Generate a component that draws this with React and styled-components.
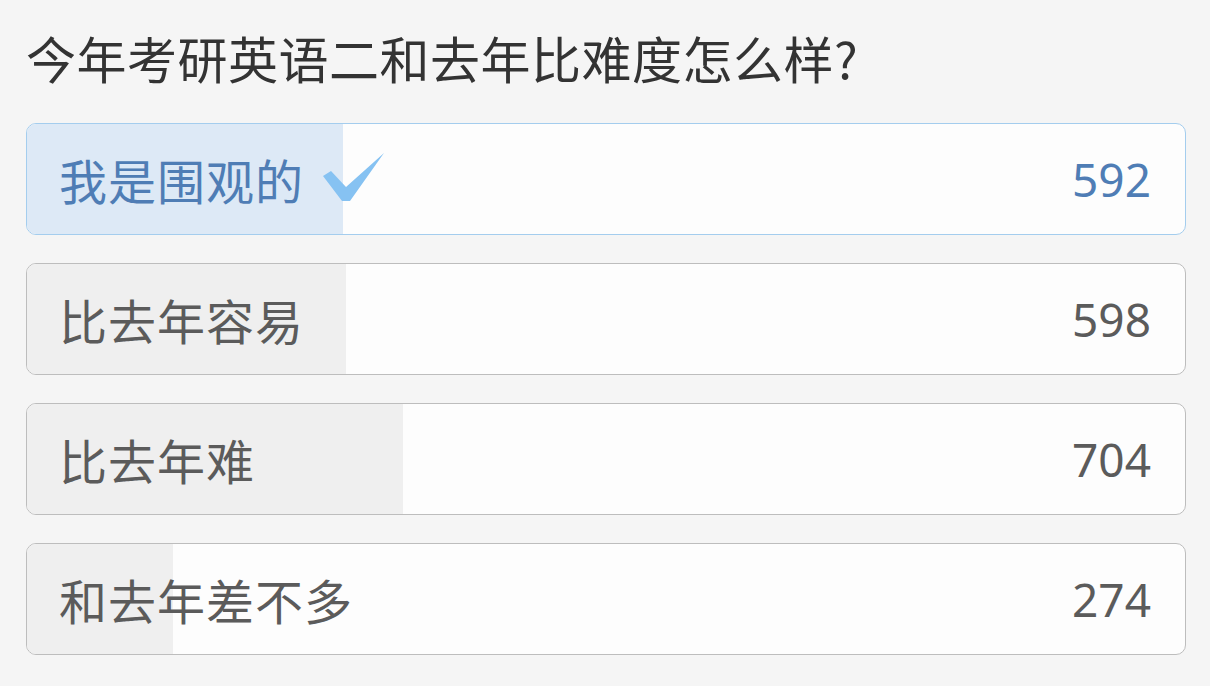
import React from "react"
import styled, { createGlobalStyle } from "styled-components"

const GlobalStyle = createGlobalStyle`
  body {
    margin: 0;
    background-color: #f5f5f5;
    font-family: "Noto Sans", "Noto Sans CJK SC", sans-serif;
  }
`

const Page = styled.div`
  padding: 27px 24px 0 26px;
  height: 686px;
  box-sizing: border-box;
  overflow: hidden;
`

const Title = styled.h1`
  margin: 0 0 36px 0;
  font-family: "Noto Sans CJK SC", sans-serif;
  font-size: 50px;
  line-height: 60px;
  font-weight: 400;
  color: #333333;
  letter-spacing: 0.5px;
`

const List = styled.div`
  display: flex;
  flex-direction: column;
  gap: 28px;
`

const Option = styled.div`
  position: relative;
  height: 112px;
  box-sizing: border-box;
  border-radius: 10px;
  border: 1.5px solid ${(p) => (p.$selected ? "#a4cdee" : "#bdbdbd")};
  background-color: #fdfdfd;
  overflow: hidden;
  display: flex;
  align-items: center;
  justify-content: space-between;
  padding: 0 34px 0 32px;
`

const Fill = styled.div`
  position: absolute;
  left: 0;
  top: 0;
  bottom: 0;
  background-color: ${(p) => (p.$selected ? "#dde9f6" : "#efefef")};
`

const Label = styled.div`
  position: relative;
  display: flex;
  align-items: center;
  gap: 18px;
  font-family: "Noto Sans CJK SC", sans-serif;
  font-size: 48px;
  letter-spacing: 1px;
  color: ${(p) => (p.$selected ? "#4f7db5" : "#5b5b5b")};
`

const Count = styled.div`
  position: relative;
  font-family: "Noto Sans", sans-serif;
  font-size: 46px;
  color: ${(p) => (p.$selected ? "#4f7db5" : "#5b5b5b")};
`

const Check = () => (
  <svg width="64" height="54" viewBox="0 0 64 54" style={{ marginTop: -4 }}>
    <polygon points="1,26 9,21 24,37 62,3 28,51 20,51" fill="#86c2f2" />
  </svg>
)

const options = [
  { label: "我是围观的", count: 592, selected: true },
  { label: "比去年容易", count: 598 },
  { label: "比去年难", count: 704 },
  { label: "和去年差不多", count: 274 },
]

const total = options.reduce((s, o) => s + o.count, 0)

const App = () => {
  return (
    <Page>
      <GlobalStyle />
      <Title>今年考研英语二和去年比难度怎么样?</Title>
      <List>
        {options.map((o) => (
          <Option key={o.label} $selected={o.selected}>
            <Fill $selected={o.selected} style={{ width: `${(o.count / total) * 100}%` }} />
            <Label $selected={o.selected}>
              {o.label}
              {o.selected && <Check />}
            </Label>
            <Count $selected={o.selected}>{o.count}</Count>
          </Option>
        ))}
      </List>
    </Page>
  )
}

export default App
